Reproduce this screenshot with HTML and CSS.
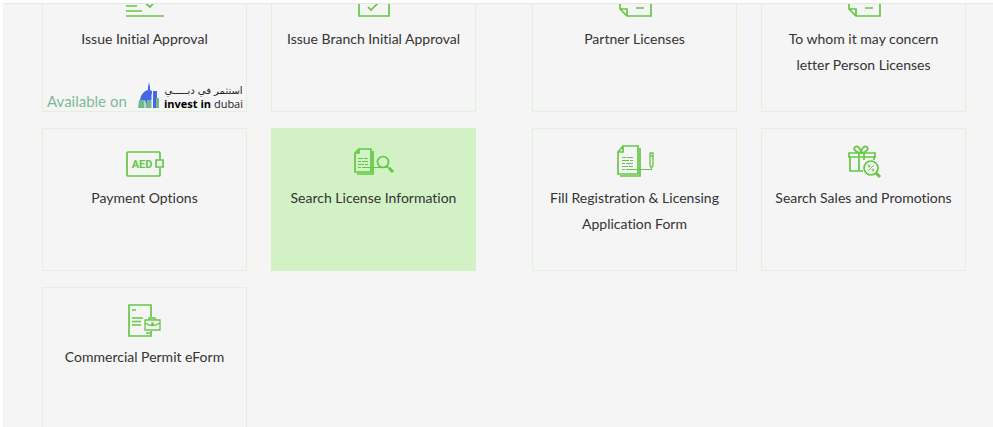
FILE: index.html
```html
<!DOCTYPE html>
<html lang="en">
<head>
  <meta charset="utf-8">
  <meta name="viewport" content="width=device-width, initial-scale=1">
  <title>Services</title>
  <link rel="stylesheet" href="styles.css">
</head>
<body>
  <main class="panel">
    <div class="services">

      <div class="group">
        <a class="card" href="#">
          <svg class="icon" viewBox="0 0 60 40">
            <path d="M11 22h11M11 27h16M11 32h38M28 17l7 6 13-14"/>
          </svg>
          <span class="title">Issue Initial Approval</span>
          <span class="available">
            <span class="available-text">Available on</span>
            <span class="invest">
              <svg class="skyline" viewBox="0 0 22 28">
                <path fill="#4467ea" d="M2 20C2 14 5 9 10 8V5l1-5 1 5v3l2 1v17H2zM15 9h4v17h-4z"/>
                <path fill="#74b892" d="M1 18h6v3h2v-3h5v8H0zM18 16h3v10h-3z"/>
                <path stroke="#f5f5f5" stroke-width="1" d="M7 19v7M14 12v14"/>
              </svg>
              <span class="invest-name">
                <span class="invest-ar" lang="ar" dir="rtl">استثمر في دبـــــي</span>
                <span class="invest-en"><b>invest in</b> dubai</span>
              </span>
            </span>
          </span>
        </a>
        <a class="card" href="#">
          <svg class="icon" viewBox="0 0 60 40">
            <path d="M15 3h30v29H15zM24 23l3 3 8-8"/>
          </svg>
          <span class="title">Issue Branch Initial Approval</span>
        </a>
        <a class="card" href="#">
          <svg class="icon" viewBox="0 0 60 40">
            <path d="M45 17V10a1 1 0 0 0-1-1H13a1 1 0 0 0-1 1v22a1 1 0 0 0 1 1h31a1 1 0 0 0 1-1v-7M41 17h7v7h-7z"/>
            <text class="aed" x="27" y="25">AED</text>
          </svg>
          <span class="title">Payment Options</span>
        </a>
        <a class="card active" href="#">
          <svg class="icon" viewBox="0 0 60 40">
            <path d="M15 6h12v23H11V10zM15 6v4h-4M29 8v23H13"/>
            <circle cx="39" cy="19" r="5.5"/>
            <path d="M43 23l2 2"/>
            <path stroke-width="3" d="M45 25l4 4"/>
            <path class="thin" d="M14 15.5h5M20 15.5h4M14 18.5h3M18 18.5h6M14 21.5h6M21 21.5h3M14 24.5h3M18 24.5h25"/>
          </svg>
          <span class="title">Search License Information</span>
        </a>
        <a class="card" href="#">
          <svg class="icon" viewBox="0 0 60 40">
            <path d="M36 15V3H14v31h22v-5"/>
            <path class="case" d="M30 18h15v10H30zM34 18v-2h6v2M30 21q7 5 15 0M37 21h1v1h-1z"/>
            <path d="M17 8h4M17 16h11M17 19.5h9M17 23h9M31 31h4"/>
          </svg>
          <span class="title">Commercial Permit eForm</span>
        </a>
      </div>

      <div class="group">
        <a class="card" href="#">
          <svg class="icon" viewBox="0 0 60 40">
            <path d="M15 25V3h31v29H22zM15 25h7v7M23 19h16M31 24h8"/>
          </svg>
          <span class="title">Partner Licenses</span>
        </a>
        <a class="card" href="#">
          <svg class="icon" viewBox="0 0 60 40">
            <path d="M15 25V3h31v29H22zM15 25h7v7M23 19h16M31 24h8"/>
          </svg>
          <span class="title">To whom it may concern letter Person Licenses</span>
        </a>
        <a class="card" href="#">
          <svg class="icon" viewBox="0 0 60 40">
            <path d="M18 3h15v28H13V9zM18 3v6h-5M35 5v28H15"/>
            <path class="thin" d="M17 14.5h4M22 14.5h6M17 17.5h7M25 17.5h3M17 20.5h3M21 20.5h7M17 23.5h6M24 23.5h4M17 26.5h3M21 26.5h26"/>
            <path class="pen" d="M45 10h3v12l-1.500 3-1.500-3zM45 13h3"/>
          </svg>
          <span class="title">Fill Registration &amp; Licensing Application Form</span>
        </a>
        <a class="card" href="#">
          <svg class="icon" viewBox="0 0 60 40">
            <path d="M15 10h26v4H15zM16 14v14h13M25 10v18M30 10v7M40 14v3"/>
            <path d="M27 10c-6-1-8-4-6-6s6 1 6 6zM27 10c6-1 8-4 6-6s-6 1-6 6z"/>
            <circle class="lens" cx="37" cy="25" r="7"/>
            <path class="thin" d="M34 28l6-6"/>
            <circle class="thin" cx="35" cy="23" r="1"/>
            <circle class="thin" cx="39" cy="27" r="1"/>
            <path stroke-width="3" d="M42 30l4 4"/>
          </svg>
          <span class="title">Search Sales and Promotions</span>
        </a>
      </div>

    </div>
  </main>
</body>
</html>
```
FILE: styles.css
```css
* {
  box-sizing: border-box;
}

body {
  margin: 0;
  padding: 3px 0 0 3px;
  background: #fff;
  font-family: Lato, "Noto Sans", sans-serif;
  font-size: 14px;
  font-variant-ligatures: none;
  color: #333;
}

.panel {
  height: calc(100vh - 3px);
  overflow: hidden;
  background: #f5f5f5;
  border-top: 1px solid #e6e6e6;
}

/* list is scrolled a little, the first row starts above the panel */
.services {
  display: grid;
  grid-template-columns: 1fr 1fr;
  gap: 56px;
  margin-top: -35px;
  padding: 0 27px 0 39px;
}

.group {
  display: grid;
  grid-template-columns: 1fr 1fr;
  align-content: start;
  gap: 16px 24px;
}

.card {
  display: flex;
  flex-direction: column;
  align-items: center;
  min-height: 143px;
  padding: 14px 3px 1px;
  border: 1px solid #dff3d9;
  color: inherit;
  text-align: center;
  text-decoration: none;
}

.card:hover,
.active {
  background: #d2f1c5;
  border-color: #d2f1c5;
}

.icon {
  width: 60px;
  height: 40px;
  margin-bottom: 2px;
  fill: none;
  stroke: #63c744;
  stroke-width: 1.7;
}

.thin {
  stroke-width: 1;
}

.case,
.pen {
  stroke-width: 1.3;
}

.lens {
  fill: #f5f5f5;
}

.aed {
  fill: #63c744;
  stroke: none;
  font-family: Roboto, sans-serif;
  font-size: 11px;
  font-weight: 700;
  text-anchor: middle;
}

.title {
  padding: 0 8px;
  line-height: 26px;
}

.available {
  display: flex;
  align-items: flex-end;
  justify-content: space-between;
  width: 100%;
  margin-top: auto;
  padding-left: 1px;
}

.available-text {
  color: #7cbb97;
  font-size: 15px;
  line-height: 18px;
}

.invest {
  display: flex;
  align-items: flex-end;
  gap: 4px;
}

.skyline {
  width: 22px;
  height: 28px;
}

.invest-name {
  display: flex;
  flex-direction: column;
  color: #222;
  line-height: 13px;
}

.invest-ar {
  font-family: "DejaVu Sans", sans-serif;
  font-size: 10px;
}

.invest-en {
  font-family: "Open Sans", sans-serif;
  font-size: 11px;
}

.invest-en b {
  color: #000;
}
```
